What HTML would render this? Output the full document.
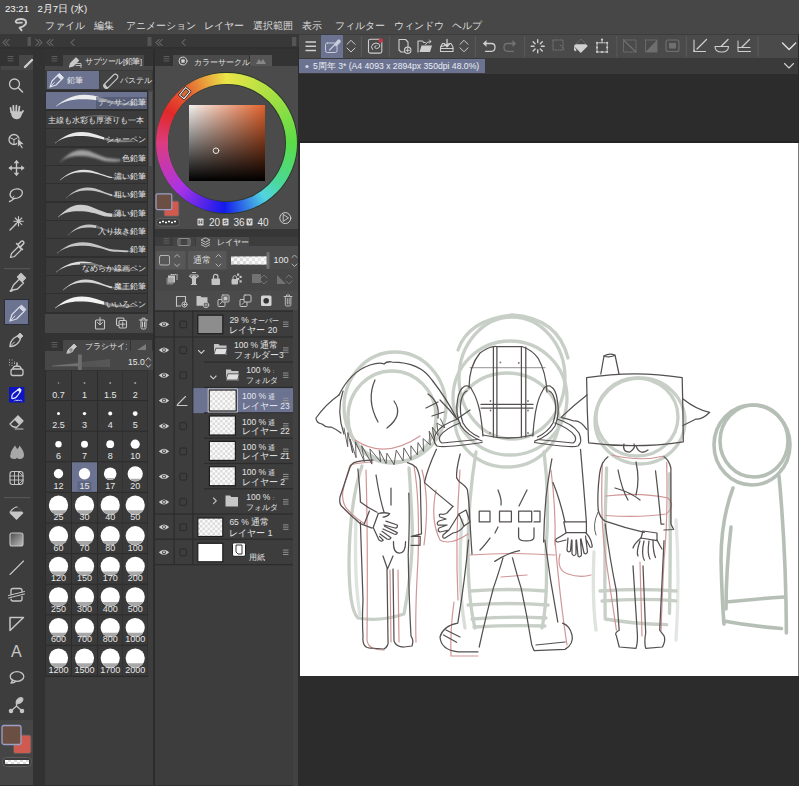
<!DOCTYPE html>
<html><head><meta charset="utf-8">
<style>
*{margin:0;padding:0;box-sizing:border-box}
html,body{width:799px;height:786px;overflow:hidden;background:#2c2c2c;font-family:"Liberation Sans",sans-serif;color:#d0d0d0}
.a{position:absolute}
.t{position:absolute;white-space:nowrap;line-height:1}
.m{font-size:10px;color:#dedede;top:20.5px}
.li{position:absolute;left:46px;width:101px;height:17px;background:#3b3b3b}
.lt{position:absolute;right:5px;bottom:3px;font-size:8.5px;color:#e4e4e4;white-space:nowrap;line-height:1}
.gc{position:absolute;width:25px;height:30px;background:#3b3b3b}
.gn{position:absolute;left:0;width:25px;text-align:center;font-size:9px;color:#e6e6e6;line-height:1}
.lr{position:absolute;left:155px;width:138px;height:24px}
.lp{position:absolute;font-size:8px;color:#e0e0e0;white-space:nowrap;line-height:1}
</style></head><body>
<!-- top bar -->
<div class="a" style="left:0;top:0;width:799px;height:34px;background:#474747"></div>
<div class="t" style="left:5px;top:3.5px;font-size:9.6px;font-weight:normal;color:#f4f4f4">23:21</div>
<div class="t" style="left:37.5px;top:3.5px;font-size:9.6px;font-weight:normal;color:#f4f4f4">2月7日 (水)</div>
<div class="t m" style="left:45px">ファイル</div>
<div class="t m" style="left:94px">編集</div>
<div class="t m" style="left:126px">アニメーション</div>
<div class="t m" style="left:204px">レイヤー</div>
<div class="t m" style="left:253px">選択範囲</div>
<div class="t m" style="left:302px">表示</div>
<div class="t m" style="left:335px">フィルター</div>
<div class="t m" style="left:394px">ウィンドウ</div>
<div class="t m" style="left:452px">ヘルプ</div>

<!-- header row -->
<div class="a" style="left:0;top:34px;width:299px;height:15px;background:#383838"></div>
<div class="a" style="left:0;top:47px;width:299px;height:2px;background:#303030"></div>

<!-- left toolbar -->
<div class="a" style="left:0;top:49px;width:33px;height:737px;background:#3d3d3d"></div>
<div class="a" style="left:0;top:49px;width:33px;height:17px;background:#333"></div>
<div class="a" style="left:19px;top:55px;width:14px;height:14px;background:#474747"></div>
<div class="a" style="left:1px;top:66px;width:32px;height:4px;background:#474747"></div>
<div class="a" style="left:4px;top:299px;width:25px;height:26px;background:#6b7391;border:1px solid #2a2d3a"></div>
<div class="a" style="left:0;top:720px;width:33px;height:66px;background:#454545"></div>
<div class="a" style="left:33px;top:49px;width:12px;height:737px;background:#323232"></div>

<!-- subtool panel -->
<div class="a" style="left:45px;top:49px;width:108px;height:737px;background:#3d3d3d"></div>
<div class="a" style="left:45px;top:49px;width:108px;height:17px;background:#333"></div>
<div class="a" style="left:63px;top:55px;width:81px;height:12px;background:#474747"></div>
<div class="a" style="left:45px;top:66px;width:108px;height:4px;background:#474747"></div>
<div class="t" style="left:85px;top:57.5px;font-size:7.6px;letter-spacing:-0.4px;color:#e0e0e0">サブツール[鉛筆]</div>
<div class="a" style="left:45px;top:70px;width:108px;height:20px;background:#3a3a3a"></div>
<div class="a" style="left:47px;top:71px;width:52px;height:18px;background:#6b7391"></div>
<div class="t" style="left:67px;top:75.5px;font-size:8.3px;color:#e8e8e8">鉛筆</div>
<div class="a" style="left:100px;top:71px;width:52px;height:18px;background:#424242"></div>
<div class="t" style="left:120px;top:75.5px;font-size:8.3px;color:#e0e0e0">パステル</div>
<div class="a" style="left:45px;top:90px;width:103px;height:224px;background:#2f2f2f"></div>
<div class="a" style="left:148px;top:90px;width:5px;height:224px;background:#454545"></div>
<div class="a" style="left:149px;top:92px;width:3px;height:74px;background:#555"></div>
<div class="li" style="top:92px;background:#6b7391"></div>
<div class="li" style="top:111px"></div>
<div class="li" style="top:129px"></div>
<div class="li" style="top:148px"></div>
<div class="li" style="top:166px"></div>
<div class="li" style="top:184px"></div>
<div class="li" style="top:203px"></div>
<div class="li" style="top:221px"></div>
<div class="li" style="top:239px"></div>
<div class="li" style="top:258px"></div>
<div class="li" style="top:276px"></div>
<div class="li" style="top:294px;height:18px"></div>
<!-- footer -->
<div class="a" style="left:45px;top:314px;width:108px;height:19px;background:#474747"></div>
<div class="a" style="left:45px;top:333px;width:108px;height:6px;background:#333"></div>
<!-- brush size -->
<div class="a" style="left:45px;top:339px;width:108px;height:12px;background:#333"></div>
<div class="a" style="left:63px;top:340px;width:67px;height:11px;background:#474747"></div>
<div class="a" style="left:131px;top:340px;width:21px;height:11px;background:#474747"></div>
<div class="t" style="left:85px;top:342.5px;font-size:7.5px;color:#e0e0e0;width:42px;overflow:hidden">ブラシサイズ</div>
<div class="a" style="left:45px;top:351px;width:108px;height:19px;background:#474747"></div>
<div class="t" style="left:128px;top:357.5px;font-size:8.6px;color:#e8e8e8">15.0</div>
<div class="a" style="left:45px;top:370px;width:103px;height:307px;background:#2c2c2c"></div>
<div class="a" style="left:148px;top:370px;width:5px;height:307px;background:#3d3d3d"></div>
<div id="grid"></div>

<!-- color/layer panel -->
<div class="a" style="left:155px;top:49px;width:143px;height:737px;background:#3d3d3d"></div>
<div class="a" style="left:155px;top:49px;width:143px;height:17px;background:#333"></div>
<div class="a" style="left:173px;top:55px;width:76px;height:11px;background:#4b4b4b"></div>
<div class="a" style="left:250px;top:55px;width:22px;height:11px;background:#555"></div>
<div class="t" style="left:194px;top:58.5px;font-size:7.5px;color:#e0e0e0">カラーサークル</div>
<div class="a" style="left:155px;top:66px;width:143px;height:163px;background:#4b4b4b"></div>
<div class="a" style="left:155px;top:229px;width:143px;height:8px;background:#363636"></div>
<div class="a" style="left:173px;top:237px;width:22px;height:9px;background:#444"></div>
<div class="a" style="left:196px;top:237px;width:53px;height:9px;background:#4b4b4b"></div>
<div class="t" style="left:216.5px;top:238.5px;font-size:7.5px;color:#e0e0e0">レイヤー</div>
<div class="a" style="left:155px;top:246px;width:143px;height:64px;background:#4b4b4b"></div>
<div class="a" style="left:155px;top:310px;width:143px;height:476px;background:#3d3d3d"></div>

<!-- canvas area -->
<div class="a" style="left:299px;top:34px;width:500px;height:24px;background:#4a4a4a"></div>
<div class="a" style="left:299px;top:33.5px;width:500px;height:1.2px;background:#3c3c3c"></div>
<div class="a" style="left:321px;top:35px;width:22px;height:23px;background:#6b7391"></div>
<div class="a" style="left:299px;top:58px;width:500px;height:16px;background:#3a3a3a"></div>
<div class="a" style="left:299px;top:59.3px;width:186px;height:13.4px;background:#6b7391"></div>
<div class="t" style="left:313px;top:61.5px;font-size:8.65px;color:#eceef4">5周年 3* (A4 4093 x 2894px 350dpi 48.0%)</div>
<div class="a" style="left:299px;top:74px;width:500px;height:712px;background:#2c2c2c"></div>
<div class="a" style="left:299px;top:141px;width:500px;height:1.5px;background:#242424"></div>
<div class="a" style="left:300px;top:142.5px;width:498px;height:533.5px;background:#fff"></div>
<div class="a" style="left:798px;top:142.5px;width:1px;height:533.5px;background:#7a7a7a"></div>
<div class="a" style="left:0;top:784.5px;width:299px;height:1.5px;background:#2e2e2e"></div>
<div class="a" style="left:155.5px;top:71.7px;width:142px;height:142px;border-radius:50%;background:#2a3a2a"></div>
<div class="a" style="left:156.3px;top:72.5px;width:140.4px;height:140.4px;border-radius:50%;background:conic-gradient(from 0deg,hsl(58,80%,60%),hsl(80,72%,57%) 40deg,hsl(112,68%,57%) 90deg,hsl(150,65%,57%) 125deg,hsl(185,70%,60%) 145deg,hsl(238,85%,50%) 182deg,hsl(280,78%,55%) 225deg,hsl(335,70%,55%) 270deg,hsl(0,75%,52%) 298deg,hsl(18,78%,55%) 325deg,hsl(58,80%,60%) 360deg)"></div>
<div class="a" style="left:167.5px;top:83.7px;width:118px;height:118px;border-radius:50%;background:#2f3a30"></div>
<div class="a" style="left:168.3px;top:84.5px;width:116.4px;height:116.4px;border-radius:50%;background:#4b4b4b"></div>
<div class="a" style="left:189px;top:105px;width:76.3px;height:76.2px;background:linear-gradient(to bottom,rgba(0,0,0,0),#000),linear-gradient(to right,#f4f2f0,#e2622c)"></div>
<svg class="a" style="left:0;top:0" width="799" height="786" viewBox="0 0 799 786"><g fill="none" stroke="#c6c6c6" stroke-width="1.3" stroke-linecap="round" stroke-linejoin="round">
<!-- header row chevrons -->
<path d="M6,39.5 l-3,3 3,3 M9,39.5 l-3,3 3,3" stroke="#8e8e8e" stroke-width="0.8"/>
<path d="M36,39.5 l3,3 -3,3 M39,39.5 l3,3 -3,3" stroke="#8e8e8e" stroke-width="0.8"/>
<path d="M50,39.5 l-3,3 3,3 M53,39.5 l-3,3 3,3" stroke="#8e8e8e" stroke-width="0.8"/>
<path d="M74,39.5 l-3,3 3,3" stroke="#8e8e8e" stroke-width="0.8"/>
<path d="M159,39.5 l-3,3 3,3 M162,39.5 l-3,3 3,3" stroke="#8e8e8e" stroke-width="0.8"/>
<path d="M185,39.5 l-3,3 3,3" stroke="#8e8e8e" stroke-width="0.8"/>
<!-- panel menus ≡ -->
<path d="M8,56.5h5M8,58.7h5M8,60.9h5 M52,56.5h5M52,58.7h5M52,60.9h5 M164,56.5h5M164,58.7h5M164,60.9h5 M52,342.5h5M52,344.7h5M52,346.9h5 M164,238.8h5M164,241h5M164,243.2h5" stroke="#7a7a7a" stroke-width="0.6"/>
<!-- tool tab pencil -->
<path d="M25,67 l7,-7" stroke="#cfcfcf" stroke-width="2.4"/>
<!-- magnifier -->
<circle cx="14.5" cy="84" r="5"/>
<path d="M18.3,87.8 l4.2,4.2" stroke-width="1.6"/>
<!-- hand -->
<path d="M11.2,112.5 l-0.6,-4.5 M13.6,111.5 l-0.3,-5.5 M16.2,111.5 l0.2,-5.8 M18.8,111.5 l0.6,-4.8 M21,114 l2,-3" stroke-width="1.8"/>
<path d="M10.8,111 L11.5,115.5 Q13,119.3 16.8,119.3 Q20.3,119.3 21.5,115.5 L21.8,111.5 L10.8,111 Z" fill="#c6c6c6" stroke="none"/>
<!-- 3D -->
<circle cx="14" cy="139.5" r="5"/>
<path d="M9.5,137.5 l4.5,2 4.5,-2 M14,139.5 l0,5" stroke-width="1"/>
<path d="M17.5,138.5 l0,9 2,-2.2 2.2,3.5 1.6,-1 -2.2,-3.3 3,-0.3 Z" fill="#c6c6c6" stroke="#3d3d3d" stroke-width="0.8"/>
<!-- move -->
<path d="M16.5,161 v14 M9.5,168 h14" stroke-width="1.4"/>
<path d="M16.5,160 l-2.8,3.3 h5.6Z M16.5,176 l-2.8,-3.3 h5.6Z M8.5,168 l3.3,-2.8 v5.6Z M24.5,168 l-3.3,-2.8 v5.6Z" fill="#c6c6c6" stroke="none"/>
<!-- lasso -->
<path d="M13,198.5 Q8.5,196 11,191.5 Q14,188 19,189 Q23.5,190.5 22,194.5 Q20,198.5 14,198.5 Q11.5,201 9.5,201.5"/>
<path d="M14,196 q-2,1 -1,3" stroke-width="1"/>
<!-- wand -->
<path d="M10,230 L16,224" stroke-width="1.4"/>
<path d="M18.5,216.5 v9.5 M13.8,221.3 h9.5 M15.2,218 l6.6,6.6 M21.8,218 l-6.6,6.6" stroke-width="1.1"/>
<circle cx="18.5" cy="221.3" r="1.8" fill="#c6c6c6" stroke="none"/>
<!-- eyedropper -->
<path d="M10.5,257.5 l1,-4 7,-7 3,3 -7,7 z" stroke-width="1.2"/>
<path d="M18,244.5 l3,-3 a1.6,1.6 0 0 1 2.4,2.4 l-3,3 M16.5,243.5 l6,6" stroke-width="1.5"/>
</g>
<!-- separators -->
<rect x="4" y="268" width="26" height="1.2" fill="#555"/>
<rect x="4" y="497" width="26" height="1.2" fill="#555"/>
<g fill="none" stroke="#c6c6c6" stroke-width="1.3" stroke-linecap="round" stroke-linejoin="round">
<!-- marker pen -->
<path d="M11,290.5 l2.5,-5.5 6,-6 4,4 -6,6 z" />
<path d="M17.5,277 l3.5,-3.5 4.5,4.5 -3.5,3.5 z" fill="#c6c6c6"/>
<path d="M10.5,291 l1.5,-0.5" stroke-width="2"/>
<!-- pencil active -->
<path d="M10,321 l2,-6.5 7.5,-7.5 4.5,4.5 -7.5,7.5 z" stroke="#d4d8e4"/>
<path d="M19.5,307 l2,-2 4.5,4.5 -2,2 z" fill="#d4d8e4" stroke="#d4d8e4" stroke-width="0.8"/>
<path d="M10,321 l5,-5" stroke="#d4d8e4" stroke-width="1"/>
<!-- ink pen -->
<path d="M10,346.5 q0,-5 4,-8.5 l3.5,-2 3,3 -2,3.5 q-3.5,4 -8.5,4 z" />
<path d="M17.5,335.5 l2.5,-2.5 3,3 -2.5,2.5 z" fill="#c6c6c6" stroke-width="0.8"/>
<path d="M10,346.5 l4.5,-4.5" stroke-width="1"/>
<!-- airbrush -->
<rect x="11" y="369" width="12" height="6.5" rx="2"/>
<path d="M13,369 q0,-3 4,-3 q4,0 4,3" />
<path d="M17,366 v-3" stroke-width="1.5"/>
<path d="M9.5,360 h0.1 M12,360 h0.1 M14.5,362 h0.1 M9.5,362.5 h0.1 M12,363 h0.1 M9.5,365 h0.1 M12,365.5 h0.1 M14.5,363.5 h0.1" stroke-width="1"/>
<!-- eraser -->
<path d="M12.5,426.5 l-2.5,-2.5 8,-8 5,5 -6.5,6.5 z" />
<path d="M14,419.5 l4,-4 5,5 -4,4 z" fill="#c6c6c6" stroke="none"/>
<path d="M15,429 h8" stroke-width="1"/>
<!-- blend drops -->
<path d="M10.5,455 q0,-4 4.5,-9.5 q2,3 2,3.5 q2,-1 2.5,-3.5 q4.5,5.5 4.5,9.5 q0,4 -4.5,4 q-2,0 -2.5,-1.5 q-0.5,1.5 -2.5,1.5 q-4.5,0 -4.5,-3.5 z" fill="#a8a8a8" stroke="none"/>
<!-- grid -->
<rect x="10" y="471.5" width="13" height="13" rx="2.5" stroke-width="1.1"/>
<path d="M14.5,471.5 v13 M18.5,471.5 v13 M10,476 h13 M10,480 h13 M18.5,471.5 l4.5,4.5 M18.5,484.5 l4.5,-4.5" stroke-width="0.9"/>
<!-- fill -->
<path d="M9.5,513 l7,-7 7,7 -7,7 z" fill="#c6c6c6" stroke="none"/>
<path d="M11,511.5 l5.5,-5.5 5.5,5.5 z" fill="#3d3d3d" stroke="none"/>
<path d="M10,512 q4,-5 7,-5" stroke-width="1.1"/>
<!-- gradient -->
<defs><linearGradient id="gg" x1="0" y1="0" x2="1" y2="1"><stop offset="0" stop-color="#4a4a4a"/><stop offset="1" stop-color="#bdbdbd"/></linearGradient></defs>
<rect x="10" y="533" width="13" height="13" rx="2" fill="url(#gg)" stroke="#c6c6c6" stroke-width="1.1"/>
<!-- line -->
<path d="M10,574.5 l13.5,-13.5" stroke-width="1.1"/>
<!-- frame -->
<rect x="11" y="588.5" width="11" height="12.5" rx="2"/>
<path d="M8.5,596.5 l16,-4 M8.5,598.5 l16,-4" stroke="#3d3d3d" stroke-width="1.8"/>
<path d="M8.5,595.5 l16,-4 M8.5,598 l16,-4" stroke-width="1"/>
<!-- ruler triangle -->
<path d="M10,630.5 v-13 h13.5 z" stroke-width="1.5"/>
<!-- balloon -->
<ellipse cx="17" cy="676.5" rx="6.8" ry="4.8"/>
<path d="M12.5,680 q-0.5,2 -1.5,3 q3,0 5,-1.8" />
<!-- correction -->
<path d="M11,711 l5.5,-5 5.5,5 M16.5,706 v-3" stroke-width="1.2"/>
<path d="M16,703 q0,-5 5,-5.5 q2,0 2,1.5 q0,4 -5.5,5 z" fill="#c6c6c6" stroke-width="0.9"/>
<circle cx="11" cy="711" r="1.6" fill="#c6c6c6"/><circle cx="22" cy="711" r="1.6" fill="#c6c6c6"/>
</g>
<!-- text A -->
<text x="16.3" y="657" font-family="Liberation Sans" font-size="16" fill="#c6c6c6" text-anchor="middle">A</text>
<!-- deco blue -->
<rect x="9" y="387" width="15.5" height="15.5" fill="#0d14c4"/>
<g fill="none" stroke="#e8ecff" stroke-width="1.2" stroke-linecap="round">
<path d="M12,398.5 q-1,-4 3,-6.5 l3.5,-2.5 2,2 -2.5,3.5 q-2.5,4 -6,3.5z"/>
<path d="M17.5,390 l2,-1.5 1.5,1.5 -1.5,2" fill="#e8ecff"/>
<path d="M14.5,401 l1.2,-1.2 1.2,1.2 1.2,-1.2 1.2,1.2 1.2,-1.2 1.2,1.2" stroke-width="0.8"/>
</g>
<!-- colors -->
<rect x="13.5" y="735" width="17.5" height="18.5" rx="2" fill="#cf5a50" stroke="#5a5a5a" stroke-width="1"/>
<rect x="2" y="725.5" width="19" height="19" rx="2" fill="#6b4f43" stroke="#9aa0c8" stroke-width="1.3"/>
<rect x="2.5" y="757.5" width="29" height="9" rx="4" fill="#3d3d3d" stroke="#5e5e5e" stroke-width="1"/>
<g fill="#fff">
<rect x="5" y="760" width="3" height="2"/><rect x="11" y="760" width="3" height="2"/><rect x="17" y="760" width="3" height="2"/><rect x="23" y="760" width="3" height="2"/>
<rect x="8" y="762" width="3" height="2"/><rect x="14" y="762" width="3" height="2"/><rect x="20" y="762" width="3" height="2"/><rect x="26" y="762" width="3" height="2"/>
<rect x="5" y="762" width="3" height="2" fill="#ddd"/><rect x="11" y="762" width="3" height="2" fill="#ddd"/><rect x="17" y="762" width="3" height="2" fill="#ddd"/><rect x="23" y="762" width="3" height="2" fill="#ddd"/>
<rect x="8" y="760" width="3" height="2" fill="#ddd"/><rect x="14" y="760" width="3" height="2" fill="#ddd"/><rect x="20" y="760" width="3" height="2" fill="#ddd"/><rect x="26" y="760" width="3" height="2" fill="#ddd"/>
</g>
<!-- grips -->
<rect x="27.5" y="37" width="3.5" height="9" fill="#555"/>
<rect x="147.5" y="37" width="4" height="9" fill="#555"/>
<rect x="292" y="37" width="4.3" height="9" fill="#555"/>
<path d="M21.9,22.6 Q18.5,22.6 16.8,22.9 Q14.6,21.8 16.8,19.9 Q21,18.2 24.8,19.8 Q27,21.8 25.5,24.3 Q23.2,27 19.6,27.7 L21.6,30.3" fill="none" stroke="#cacaca" stroke-width="1.9" stroke-linecap="round" stroke-linejoin="round"/>
<!-- layer tab icons -->
<rect x="178" y="238.5" width="12" height="7" rx="0.8" fill="none" stroke="#8a8a8a" stroke-width="1"/>
<path d="M180,238.5 v7 M188,238.5 v7" stroke="#8a8a8a" stroke-width="0.8"/>
<g fill="none" stroke="#c8c8c8" stroke-width="0.9" stroke-linejoin="round"><path d="M201,240 l4.5,-2.2 4.5,2.2 -4.5,2.2 z"/><path d="M201,242.3 l4.5,2.2 4.5,-2.2 M201,244.6 l4.5,2.2 4.5,-2.2"/></g>
<defs><filter id="b1" x="-20%" y="-50%" width="140%" height="200%"><feGaussianBlur stdDeviation="1.1"/></filter><filter id="b2" x="-20%" y="-50%" width="140%" height="200%"><feGaussianBlur stdDeviation="0.4"/></filter></defs>
<path d="M56.0,106.0 C62.9,101.0 71.5,94.8 84.4,94.8 C97.3,94.8 104.2,99.8 117.9,102.4 L142.0,104.0 L142.0,104.6 C133.4,105.7 124.8,105.5 114.5,104.5 C103.3,101.2 94.7,99.2 81.8,99.2 C71.5,99.2 62.9,101.5 56.0,106.4 Z" fill="#f2f2f2" opacity="0.95"/>
<path d="M55.0,143.0 C61.4,138.0 69.4,131.9 81.4,131.9 C93.4,131.9 99.8,136.9 112.6,139.4 L135.0,141.0 L135.0,141.6 C127.0,142.7 119.0,142.4 109.4,141.4 C99.0,138.1 91.0,136.1 79.0,136.1 C69.4,136.1 61.4,138.5 55.0,143.4 Z" fill="#f2f2f2" opacity="0.95"/>
<path d="M60.0,162.0 C65.2,157.0 71.7,150.0 81.5,150.0 C91.2,150.0 96.4,155.0 106.8,158.0 L125.0,160.0 L125.0,160.6 C118.5,162.1 112.0,162.0 104.2,161.0 C95.8,158.0 89.2,156.0 79.5,156.0 C71.7,156.0 65.2,157.5 60.0,162.4 Z" fill="#f2f2f2" opacity="0.55" filter="url(#b1)"/>
<path d="M60.0,180.0 C65.8,175.0 73.0,169.8 83.8,169.8 C94.6,169.8 100.3,174.8 111.8,176.9 L132.0,178.0 L132.0,178.6 C124.8,179.2 117.6,178.8 109.0,177.8 C99.6,174.2 92.4,172.2 81.6,172.2 C73.0,172.2 65.8,175.5 60.0,180.4 Z" fill="#f2f2f2" opacity="0.9"/>
<path d="M66.0,198.0 C71.3,193.0 77.9,187.4 87.8,187.4 C97.7,187.4 103.0,192.4 113.5,194.7 L132.0,196.0 L132.0,196.6 C125.4,197.4 118.8,197.1 110.9,196.1 C102.3,192.6 95.7,190.6 85.8,190.6 C77.9,190.6 71.3,193.5 66.0,198.4 Z" fill="#f2f2f2" opacity="0.75" filter="url(#b2)"/>
<path d="M58.0,217.0 C63.4,212.0 70.2,204.8 80.4,204.8 C90.6,204.8 96.1,209.8 107.0,212.9 L126.0,215.0 L126.0,215.6 C119.2,217.2 112.4,217.2 104.2,216.2 C95.4,213.2 88.6,211.2 78.4,211.2 C70.2,211.2 63.4,212.5 58.0,217.4 Z" fill="#f2f2f2" opacity="0.8" filter="url(#b2)"/>
<path d="M68.0,235.0 C73.1,230.0 79.5,224.4 89.1,224.4 C98.7,224.4 103.8,229.4 114.1,231.7 L132.0,233.0 L132.0,233.6 C125.6,234.4 119.2,234.1 111.5,233.1 C103.2,229.6 96.8,227.6 87.2,227.6 C79.5,227.6 73.1,230.5 68.0,235.4 Z" fill="#f2f2f2" opacity="0.75" filter="url(#b2)"/>
<path d="M57.0,253.0 C63.2,248.0 71.0,242.2 82.7,242.2 C94.4,242.2 100.7,247.2 113.2,249.6 L135.0,251.0 L135.0,251.6 C127.2,252.5 119.4,252.2 110.0,251.2 C99.9,247.8 92.1,245.8 80.4,245.8 C71.0,245.8 63.2,248.5 57.0,253.4 Z" fill="#f2f2f2" opacity="0.75" filter="url(#b2)"/>
<path d="M56.0,272.0 C62.4,267.0 70.4,261.4 82.4,261.4 C94.4,261.4 100.8,266.4 113.6,268.7 L136.0,270.0 L136.0,270.6 C128.0,271.4 120.0,271.1 110.4,270.1 C100.0,266.6 92.0,264.6 80.0,264.6 C70.4,264.6 62.4,267.5 56.0,272.4 Z" fill="#f2f2f2" opacity="0.9"/>
<path d="M63.0,290.0 C68.5,285.0 75.4,279.5 85.8,279.5 C96.1,279.5 101.6,284.5 112.7,286.8 L132.0,288.0 L132.0,288.6 C125.1,289.4 118.2,289.0 109.9,288.0 C101.0,284.5 94.0,282.5 83.7,282.5 C75.4,282.5 68.5,285.5 63.0,290.4 Z" fill="#f2f2f2" opacity="0.85"/>
<path d="M55.0,308.0 C61.5,303.0 69.6,296.6 81.7,296.6 C93.9,296.6 100.4,301.6 113.3,304.3 L136.0,306.0 L136.0,306.6 C127.9,307.8 119.8,307.6 110.1,306.6 C99.6,303.4 91.5,301.4 79.3,301.4 C69.6,301.4 61.5,303.5 55.0,308.4 Z" fill="#f2f2f2" opacity="1.0"/>
<path d="M80,118 q20,-5 40,0" stroke="#888" stroke-width="0.7" fill="none"/>
<g fill="none" stroke="#c8c8c8" stroke-width="1.1" stroke-linecap="round" stroke-linejoin="round">
<path d="M69.5,67 l1,-3.5 5.5,-5.5 2.5,2.5 -5.5,5.5 z" fill="#c8c8c8"/>
<path d="M76,63.5 h5 v4 M76,65.5 h5" stroke-width="0.9"/>
<path d="M50,87 l2,-6 7,-7 4,4 -7,7 z" stroke="#dfe2ea"/><path d="M57,76 l2.5,-2.5 4,4 -2.5,2.5" fill="#dfe2ea" stroke="#dfe2ea" stroke-width="0.8"/><path d="M50,87 l4.5,-4.5" stroke="#dfe2ea" stroke-width="0.8"/>
<path d="M104.5,84 l9,-9 a2.5,2.5 0 0 1 3.6,3.6 l-9,9 a2.5,2.5 0 0 1 -3.6,-3.6 z"/><path d="M105,84.5 a2,2 0 0 0 3,3" fill="#c8c8c8"/>
<rect x="95.5" y="320" width="9" height="9" rx="1"/><path d="M100,317.5 v7 M97.5,322.5 l2.5,2.5 2.5,-2.5" stroke-width="1"/>
<rect x="116.5" y="318" width="7.5" height="7.5" rx="1.2"/><rect x="119" y="320.5" width="7.5" height="7.5" rx="1.2" fill="#474747"/><path d="M122.7,322 v4.5 M120.5,324.2 h4.5" stroke-width="1"/>
<path d="M139.5,320 h8 M141,320 v7.5 q0,1.5 1.5,1.5 h2 q1.5,0 1.5,-1.5 v-7.5 M142,319.5 v-1.3 h3 v1.3 M142.5,322 v5 M144.5,322 v5" stroke-width="1"/>
<path d="M67,353 l1,-3 6,-6 2.5,2.5 -6,6 z" fill="#c8c8c8" stroke-width="0.9"/><circle cx="71" cy="350" r="2.2" fill="#8a8a8a" stroke="#c8c8c8" stroke-width="0.7"/>
<path d="M137,350 l9,-6 v6 z" fill="#7a7a7a" stroke="none"/>
</g>
<defs><linearGradient id="ramp" x1="0" x2="1"><stop offset="0" stop-color="#505050"/><stop offset="1" stop-color="#575757"/></linearGradient></defs>
<path d="M52,365.5 L110,359 L110,367 L52,366.5 Z" fill="url(#ramp)"/>
<path d="M52,365.8 L79,363.2 L79,366 L52,366.3 Z" fill="#7a7a7a" opacity="0.8"/>
<rect x="78" y="354.5" width="3.8" height="15.5" fill="#6e6e6e"/>
<path d="M145.8,360.5 l2.5,-2.8 2.5,2.8 M145.8,364.5 l2.5,2.8 2.5,-2.8" stroke="#c8c8c8" stroke-width="0.9" fill="none"/>
<rect x="46" y="370.5" width="25" height="29.6" fill="#3a3a3a"/>
<circle cx="58.5" cy="383.0" r="0.80" fill="#9a9a9a"/>
<rect x="72" y="370.5" width="25" height="29.6" fill="#3a3a3a"/>
<circle cx="84.5" cy="383.0" r="0.90" fill="#9a9a9a"/>
<rect x="98" y="370.5" width="24.5" height="29.6" fill="#3a3a3a"/>
<circle cx="110.2" cy="383.0" r="1.00" fill="#9a9a9a"/>
<rect x="123" y="370.5" width="24.5" height="29.6" fill="#3a3a3a"/>
<circle cx="135.2" cy="383.0" r="1.10" fill="#9a9a9a"/>
<rect x="46" y="401.1" width="25" height="29.6" fill="#3a3a3a"/>
<circle cx="58.5" cy="413.6" r="1.50" fill="#ffffff"/>
<rect x="72" y="401.1" width="25" height="29.6" fill="#3a3a3a"/>
<circle cx="84.5" cy="413.6" r="1.70" fill="#ffffff"/>
<rect x="98" y="401.1" width="24.5" height="29.6" fill="#3a3a3a"/>
<circle cx="110.2" cy="413.6" r="2.00" fill="#ffffff"/>
<rect x="123" y="401.1" width="24.5" height="29.6" fill="#3a3a3a"/>
<circle cx="135.2" cy="413.6" r="2.40" fill="#ffffff"/>
<rect x="46" y="431.7" width="25" height="29.6" fill="#3a3a3a"/>
<circle cx="58.5" cy="444.2" r="3.20" fill="#ffffff"/>
<rect x="72" y="431.7" width="25" height="29.6" fill="#3a3a3a"/>
<circle cx="84.5" cy="444.2" r="3.50" fill="#ffffff"/>
<rect x="98" y="431.7" width="24.5" height="29.6" fill="#3a3a3a"/>
<circle cx="110.2" cy="444.2" r="3.90" fill="#ffffff"/>
<rect x="123" y="431.7" width="24.5" height="29.6" fill="#3a3a3a"/>
<circle cx="135.2" cy="444.2" r="4.60" fill="#ffffff"/>
<rect x="46" y="462.3" width="25" height="29.6" fill="#3a3a3a"/>
<circle cx="58.5" cy="473.8" r="4.70" fill="#ffffff"/>
<rect x="72" y="462.3" width="25" height="29.6" fill="#6b7391"/>
<circle cx="84.5" cy="473.8" r="5.70" fill="#ffffff"/>
<rect x="77.5" y="481.3" width="14" height="10" rx="1.5" fill="#5d6481"/>
<rect x="98" y="462.3" width="24.5" height="29.6" fill="#3a3a3a"/>
<circle cx="110.2" cy="473.8" r="6.30" fill="#ffffff"/>
<path d="M105.5,477.9 A6.30,6.30 0 0 0 115.0,477.9 Z" fill="#aaa"/>
<rect x="123" y="462.3" width="24.5" height="29.6" fill="#3a3a3a"/>
<circle cx="135.2" cy="473.8" r="7.60" fill="#ffffff"/>
<path d="M129.6,478.7 A7.60,7.60 0 0 0 140.9,478.7 Z" fill="#aaa"/>
<rect x="46" y="492.9" width="25" height="29.6" fill="#3a3a3a"/>
<circle cx="58.5" cy="505.1" r="9.6" fill="#ffffff"/>
<path d="M50.4,510.3 A9.6,9.6 0 0 0 66.6,510.3 Z" fill="#a8a8a8"/>
<rect x="72" y="492.9" width="25" height="29.6" fill="#3a3a3a"/>
<circle cx="84.5" cy="505.1" r="9.6" fill="#ffffff"/>
<path d="M76.4,510.3 A9.6,9.6 0 0 0 92.6,510.3 Z" fill="#a8a8a8"/>
<rect x="98" y="492.9" width="24.5" height="29.6" fill="#3a3a3a"/>
<circle cx="110.2" cy="505.1" r="9.6" fill="#ffffff"/>
<path d="M102.2,510.3 A9.6,9.6 0 0 0 118.3,510.3 Z" fill="#a8a8a8"/>
<rect x="123" y="492.9" width="24.5" height="29.6" fill="#3a3a3a"/>
<circle cx="135.2" cy="505.1" r="9.6" fill="#ffffff"/>
<path d="M127.2,510.3 A9.6,9.6 0 0 0 143.3,510.3 Z" fill="#a8a8a8"/>
<rect x="46" y="523.5" width="25" height="29.6" fill="#3a3a3a"/>
<circle cx="58.5" cy="535.7" r="9.6" fill="#ffffff"/>
<path d="M50.4,540.9 A9.6,9.6 0 0 0 66.6,540.9 Z" fill="#a8a8a8"/>
<rect x="72" y="523.5" width="25" height="29.6" fill="#3a3a3a"/>
<circle cx="84.5" cy="535.7" r="9.6" fill="#ffffff"/>
<path d="M76.4,540.9 A9.6,9.6 0 0 0 92.6,540.9 Z" fill="#a8a8a8"/>
<rect x="98" y="523.5" width="24.5" height="29.6" fill="#3a3a3a"/>
<circle cx="110.2" cy="535.7" r="9.6" fill="#ffffff"/>
<path d="M102.2,540.9 A9.6,9.6 0 0 0 118.3,540.9 Z" fill="#a8a8a8"/>
<rect x="123" y="523.5" width="24.5" height="29.6" fill="#3a3a3a"/>
<circle cx="135.2" cy="535.7" r="9.6" fill="#ffffff"/>
<path d="M127.2,540.9 A9.6,9.6 0 0 0 143.3,540.9 Z" fill="#a8a8a8"/>
<rect x="46" y="554.1" width="25" height="29.6" fill="#3a3a3a"/>
<circle cx="58.5" cy="566.3" r="9.6" fill="#ffffff"/>
<path d="M50.4,571.5 A9.6,9.6 0 0 0 66.6,571.5 Z" fill="#a8a8a8"/>
<rect x="72" y="554.1" width="25" height="29.6" fill="#3a3a3a"/>
<circle cx="84.5" cy="566.3" r="9.6" fill="#ffffff"/>
<path d="M76.4,571.5 A9.6,9.6 0 0 0 92.6,571.5 Z" fill="#a8a8a8"/>
<rect x="98" y="554.1" width="24.5" height="29.6" fill="#3a3a3a"/>
<circle cx="110.2" cy="566.3" r="9.6" fill="#ffffff"/>
<path d="M102.2,571.5 A9.6,9.6 0 0 0 118.3,571.5 Z" fill="#a8a8a8"/>
<rect x="123" y="554.1" width="24.5" height="29.6" fill="#3a3a3a"/>
<circle cx="135.2" cy="566.3" r="9.6" fill="#ffffff"/>
<path d="M127.2,571.5 A9.6,9.6 0 0 0 143.3,571.5 Z" fill="#a8a8a8"/>
<rect x="46" y="584.7" width="25" height="29.6" fill="#3a3a3a"/>
<circle cx="58.5" cy="596.9" r="9.6" fill="#ffffff"/>
<path d="M50.4,602.1 A9.6,9.6 0 0 0 66.6,602.1 Z" fill="#a8a8a8"/>
<rect x="72" y="584.7" width="25" height="29.6" fill="#3a3a3a"/>
<circle cx="84.5" cy="596.9" r="9.6" fill="#ffffff"/>
<path d="M76.4,602.1 A9.6,9.6 0 0 0 92.6,602.1 Z" fill="#a8a8a8"/>
<rect x="98" y="584.7" width="24.5" height="29.6" fill="#3a3a3a"/>
<circle cx="110.2" cy="596.9" r="9.6" fill="#ffffff"/>
<path d="M102.2,602.1 A9.6,9.6 0 0 0 118.3,602.1 Z" fill="#a8a8a8"/>
<rect x="123" y="584.7" width="24.5" height="29.6" fill="#3a3a3a"/>
<circle cx="135.2" cy="596.9" r="9.6" fill="#ffffff"/>
<path d="M127.2,602.1 A9.6,9.6 0 0 0 143.3,602.1 Z" fill="#a8a8a8"/>
<rect x="46" y="615.3" width="25" height="29.6" fill="#3a3a3a"/>
<circle cx="58.5" cy="627.5" r="9.6" fill="#ffffff"/>
<path d="M50.4,632.7 A9.6,9.6 0 0 0 66.6,632.7 Z" fill="#a8a8a8"/>
<rect x="72" y="615.3" width="25" height="29.6" fill="#3a3a3a"/>
<circle cx="84.5" cy="627.5" r="9.6" fill="#ffffff"/>
<path d="M76.4,632.7 A9.6,9.6 0 0 0 92.6,632.7 Z" fill="#a8a8a8"/>
<rect x="98" y="615.3" width="24.5" height="29.6" fill="#3a3a3a"/>
<circle cx="110.2" cy="627.5" r="9.6" fill="#ffffff"/>
<path d="M102.2,632.7 A9.6,9.6 0 0 0 118.3,632.7 Z" fill="#a8a8a8"/>
<rect x="123" y="615.3" width="24.5" height="29.6" fill="#3a3a3a"/>
<circle cx="135.2" cy="627.5" r="9.6" fill="#ffffff"/>
<path d="M127.2,632.7 A9.6,9.6 0 0 0 143.3,632.7 Z" fill="#a8a8a8"/>
<rect x="46" y="645.9" width="25" height="29.6" fill="#3a3a3a"/>
<circle cx="58.5" cy="658.1" r="9.6" fill="#ffffff"/>
<path d="M50.4,663.3 A9.6,9.6 0 0 0 66.6,663.3 Z" fill="#a8a8a8"/>
<rect x="72" y="645.9" width="25" height="29.6" fill="#3a3a3a"/>
<circle cx="84.5" cy="658.1" r="9.6" fill="#ffffff"/>
<path d="M76.4,663.3 A9.6,9.6 0 0 0 92.6,663.3 Z" fill="#a8a8a8"/>
<rect x="98" y="645.9" width="24.5" height="29.6" fill="#3a3a3a"/>
<circle cx="110.2" cy="658.1" r="9.6" fill="#ffffff"/>
<path d="M102.2,663.3 A9.6,9.6 0 0 0 118.3,663.3 Z" fill="#a8a8a8"/>
<rect x="123" y="645.9" width="24.5" height="29.6" fill="#3a3a3a"/>
<circle cx="135.2" cy="658.1" r="9.6" fill="#ffffff"/>
<path d="M127.2,663.3 A9.6,9.6 0 0 0 143.3,663.3 Z" fill="#a8a8a8"/>
<g fill="none" stroke="#d0d0d0" stroke-linecap="round" stroke-linejoin="round">
<circle cx="183" cy="61" r="4" stroke-width="1"/>
<rect x="181.3" y="59.3" width="3.4" height="3.4" fill="#d0d0d0" stroke="none"/>
<path d="M256,64 l3,-5 2,3 2,-3 3,5 z" fill="#888" stroke="none"/>
<!-- hue marker -->
<g transform="translate(184.8,93.2) rotate(-50)">
<rect x="-4.8" y="-3" width="9.6" height="6" fill="#d26a3a" stroke="#111" stroke-width="2.2"/>
<rect x="-4.8" y="-3" width="9.6" height="6" fill="none" stroke="#fff" stroke-width="1"/>
</g>
<circle cx="216" cy="150.7" r="2.8" stroke="#e8e8e8" stroke-width="1"/>
<!-- swatches -->
<rect x="164" y="201" width="15" height="15.3" rx="1.5" fill="#cf5a50" stroke="#5a5a5a" stroke-width="1"/>
<rect x="156" y="193.8" width="15.8" height="15.8" rx="1.5" fill="#6b4f43" stroke="#9aa0c8" stroke-width="1.2"/>
<rect x="156.5" y="218.5" width="23" height="7.5" rx="3.5" fill="#3d3d3d" stroke="#6a6a6a" stroke-width="0.8"/>
<path d="M159,222.5 h2 M162,221.5 h2 M165,222.5 h2 M168,221.5 h2 M171,222.5 h2 M174,221.5 h2" stroke="#fff" stroke-width="1.3" stroke-linecap="butt"/>
<circle cx="285.3" cy="218.1" r="5.5" stroke-width="1"/>
<path d="M283.2,214.8 v6.6 l5,-3.3 z" stroke-width="0.9"/>
</g>
<g fill="#d8d8d8">
<rect x="197.5" y="218.5" width="6" height="7" rx="0.8"/>
<rect x="222.5" y="218.5" width="6" height="7" rx="0.8"/>
<rect x="246.5" y="218.5" width="6" height="7" rx="0.8"/>
</g>
<g font-family="Liberation Sans" font-size="6" font-weight="bold" fill="#4b4b4b" text-anchor="middle">
<text x="200.5" y="224.3">H</text><text x="225.5" y="224.3">S</text><text x="249.5" y="224.3">V</text>
</g>
<g font-family="Liberation Sans" font-size="10" fill="#e4e4e4">
<text x="209" y="225.5">20</text><text x="233.5" y="225.5">36</text><text x="257.5" y="225.5">40</text>
</g>
<rect x="155.6" y="251" width="30" height="19" rx="1.5" fill="#575757"/>
<rect x="188" y="251" width="38.6" height="19" rx="1.5" fill="#575757"/>
<g fill="none" stroke="#bdbdbd" stroke-width="0.9" stroke-linecap="round" stroke-linejoin="round">
<rect x="159.5" y="255.5" width="10" height="9.5" rx="1.5"/>
<path d="M174.5,257 l2.5,-2.5 2.5,2.5 M174.5,264 l2.5,2.5 2.5,-2.5"/>
<path d="M216,257 l2.5,-2.5 2.5,2.5 M216,264 l2.5,2.5 2.5,-2.5"/>
<path d="M292,257.5 l2.5,-2.5 2.5,2.5 M292,264 l2.5,2.5 2.5,-2.5"/>
</g>
<defs><pattern id="chk" width="6" height="6" patternUnits="userSpaceOnUse"><rect width="6" height="6" fill="#f4f4f4"/><rect width="3" height="3" fill="#c8c8c8"/><rect x="3" y="3" width="3" height="3" fill="#c8c8c8"/></pattern>
<pattern id="chk2" width="5" height="5" patternUnits="userSpaceOnUse"><rect width="5" height="5" fill="#fafafa"/><rect width="2.5" height="2.5" fill="#dcdcdc"/><rect x="2.5" y="2.5" width="2.5" height="2.5" fill="#dcdcdc"/></pattern>
<linearGradient id="opg" x1="0" x2="1"><stop offset="0" stop-color="#fff" stop-opacity="0.2"/><stop offset="1" stop-color="#fff" stop-opacity="0.6"/></linearGradient></defs>
<rect x="231" y="256.5" width="36" height="8" fill="url(#chk)"/>
<rect x="231" y="256.5" width="36" height="8" fill="url(#opg)"/>
<rect x="266.5" y="252" width="3" height="17" rx="1" fill="#707070"/>
<rect x="155" y="269.5" width="143" height="21" fill="#474747"/>
<g fill="none" stroke="#c4c4c4" stroke-width="1" stroke-linecap="round" stroke-linejoin="round">
<rect x="168" y="275.5" width="7" height="7" fill="#c4c4c4" stroke="none"/><path d="M171,274.5 h6 v6" stroke-dasharray="1,1"/><rect x="166.5" y="277.5" width="7" height="7" rx="1" fill="#9a9a9a" stroke="none" opacity="0.7"/>
<path d="M194,275 v9 M190.5,275 h7 M191.5,284.5 h5 M192,278 l-2.5,-2 M196,278 l2.5,-2 M192.5,272.5 h3" stroke-width="1.2"/><rect x="192" y="276" width="4" height="8.5" fill="#c4c4c4" stroke="none"/>
<rect x="211.5" y="278.5" width="8.5" height="6.5" rx="1" fill="#c4c4c4" stroke="none"/><path d="M213.5,278.5 v-2 a2.2,2.2 0 0 1 4.4,0 v2" stroke-width="1.2"/>
<rect x="231.5" y="279" width="6.5" height="5.5" rx="1" fill="#c4c4c4" stroke="none"/><path d="M233,279 v-1.5 a1.8,1.8 0 0 1 3.6,0 v1.5"/><g fill="#c4c4c4" stroke="none"><rect x="237" y="273.5" width="2.2" height="2.2"/><rect x="239.5" y="275.8" width="2.2" height="2.2"/><rect x="237" y="278" width="2.2" height="2.2"/><rect x="239.5" y="280.3" width="2.2" height="2.2"/></g>
<g opacity="0.35"><rect x="252" y="274" width="9" height="9" rx="1" fill="#c4c4c4" stroke="none"/><path d="M261,278 l3,-3 3,3 M261,281 l3,3 3,-3"/></g>
<g opacity="0.35"><path d="M277,284 v-9 l9,9 z" fill="#c4c4c4" stroke="none"/><path d="M286,278 l3,-3 3,3 M286,281 l3,3 3,-3"/></g>
<path d="M176.5,306 v-9.5 h9 v7" stroke-width="1.1"/><path d="M176.5,306 h4" stroke-width="1.1"/><circle cx="184.5" cy="304.5" r="2.6" fill="#474747"/><path d="M184.5,303 v3 M183,304.5 h3" stroke-width="0.9"/>
<path d="M196.5,296 h4 l1,1.3 h6 v8.5 h-11 z" fill="#c4c4c4" stroke="none"/><circle cx="206" cy="305" r="2.8" fill="#474747" stroke="#c4c4c4" stroke-width="0.9"/><path d="M206,303.5 v3 M204.5,305 h3" stroke-width="0.8"/>
<rect x="218" y="299.5" width="7" height="7" rx="1" fill="#474747"/><rect x="222" y="295" width="7" height="7" rx="1" fill="#474747"/><rect x="223.5" y="296.5" width="4" height="4" fill="#c4c4c4" stroke="none"/><path d="M223,301 l-3,3" stroke-width="0.9"/>
<rect x="240" y="299.5" width="7" height="7" rx="1" fill="#474747"/><rect x="244" y="295" width="7" height="7" rx="1" fill="#474747"/><path d="M242,304.5 l3,-3" stroke-width="0.9"/>
<rect x="261" y="295.5" width="10.5" height="10.5" rx="1.5" fill="#d4d4d4" stroke="none"/><circle cx="266.2" cy="300.7" r="2.8" fill="#333" stroke="none"/>
<path d="M284,296.5 h8 M285.3,296.5 v8 q0,1.5 1.3,1.5 h3 q1.3,0 1.3,-1.5 v-8 M286.5,296 v-1 h3 v1 M287.3,298.5 v5.5 M289.2,298.5 v5.5" stroke-width="0.9"/>
</g>
<rect x="155" y="310" width="138" height="254.6" fill="#3d3d3d"/>
<rect x="293" y="310" width="5" height="476" fill="#424242"/>
<rect x="193" y="388.1" width="100" height="25" fill="#6b7391"/>
<rect x="155" y="310.6" width="138" height="1.2" fill="#2c2c2c"/>
<rect x="155" y="336.4" width="138" height="1.2" fill="#2c2c2c"/>
<rect x="204" y="361.5" width="89" height="1.2" fill="#2c2c2c"/>
<rect x="204" y="386.8" width="89" height="1.2" fill="#2c2c2c"/>
<rect x="204" y="412.2" width="89" height="1.2" fill="#2c2c2c"/>
<rect x="204" y="437.6" width="89" height="1.2" fill="#2c2c2c"/>
<rect x="204" y="462.9" width="89" height="1.2" fill="#2c2c2c"/>
<rect x="204" y="488.2" width="89" height="1.2" fill="#2c2c2c"/>
<rect x="155" y="513.4" width="138" height="1.2" fill="#2c2c2c"/>
<rect x="155" y="538.6" width="138" height="1.2" fill="#2c2c2c"/>
<rect x="155" y="564.0" width="138" height="1.2" fill="#2c2c2c"/>
<rect x="173.5" y="310" width="1.2" height="254.6" fill="#2c2c2c"/>
<rect x="192.2" y="310" width="1.2" height="254.6" fill="#2c2c2c"/>
<path d="M158.8,324.3 q5.2,-5 10.4,0 q-5.2,5 -10.4,0 z" fill="#d0d0d0"/><circle cx="164" cy="324.3" r="1.9" fill="#3d3d3d"/><circle cx="164" cy="324.3" r="1" fill="#d0d0d0"/>
<rect x="179.8" y="321.0" width="6.8" height="6.8" rx="1.3" fill="none" stroke="#2a2a2a" stroke-width="1"/>
<path d="M283,322.1 h5.5 M283,324.3 h5.5 M283,326.5 h5.5" stroke="#9a9a9a" stroke-width="0.9"/>
<path d="M158.8,350.1 q5.2,-5 10.4,0 q-5.2,5 -10.4,0 z" fill="#d0d0d0"/><circle cx="164" cy="350.1" r="1.9" fill="#3d3d3d"/><circle cx="164" cy="350.1" r="1" fill="#d0d0d0"/>
<rect x="179.8" y="346.8" width="6.8" height="6.8" rx="1.3" fill="none" stroke="#2a2a2a" stroke-width="1"/>
<path d="M283,347.9 h5.5 M283,350.1 h5.5 M283,352.3 h5.5" stroke="#9a9a9a" stroke-width="0.9"/>
<path d="M158.8,375.2 q5.2,-5 10.4,0 q-5.2,5 -10.4,0 z" fill="#d0d0d0"/><circle cx="164" cy="375.2" r="1.9" fill="#3d3d3d"/><circle cx="164" cy="375.2" r="1" fill="#d0d0d0"/>
<rect x="179.8" y="371.9" width="6.8" height="6.8" rx="1.3" fill="none" stroke="#2a2a2a" stroke-width="1"/>
<path d="M283,373.0 h5.5 M283,375.2 h5.5 M283,377.4 h5.5" stroke="#9a9a9a" stroke-width="0.9"/>
<path d="M158.8,400.5 q5.2,-5 10.4,0 q-5.2,5 -10.4,0 z" fill="#d0d0d0"/><circle cx="164" cy="400.5" r="1.9" fill="#3d3d3d"/><circle cx="164" cy="400.5" r="1" fill="#d0d0d0"/>
<path d="M177,405.5 h10 M177.5,404.5 l8,-8" stroke="#c8c8c8" stroke-width="1.1" fill="none" stroke-linecap="round"/>
<path d="M283,398.3 h5.5 M283,400.5 h5.5 M283,402.7 h5.5" stroke="#9a9a9a" stroke-width="0.9"/>
<path d="M158.8,425.9 q5.2,-5 10.4,0 q-5.2,5 -10.4,0 z" fill="#d0d0d0"/><circle cx="164" cy="425.9" r="1.9" fill="#3d3d3d"/><circle cx="164" cy="425.9" r="1" fill="#d0d0d0"/>
<rect x="179.8" y="422.6" width="6.8" height="6.8" rx="1.3" fill="none" stroke="#2a2a2a" stroke-width="1"/>
<path d="M283,423.7 h5.5 M283,425.9 h5.5 M283,428.1 h5.5" stroke="#9a9a9a" stroke-width="0.9"/>
<path d="M158.8,451.3 q5.2,-5 10.4,0 q-5.2,5 -10.4,0 z" fill="#d0d0d0"/><circle cx="164" cy="451.3" r="1.9" fill="#3d3d3d"/><circle cx="164" cy="451.3" r="1" fill="#d0d0d0"/>
<rect x="179.8" y="448.0" width="6.8" height="6.8" rx="1.3" fill="none" stroke="#2a2a2a" stroke-width="1"/>
<path d="M283,449.1 h5.5 M283,451.3 h5.5 M283,453.5 h5.5" stroke="#9a9a9a" stroke-width="0.9"/>
<path d="M158.8,476.6 q5.2,-5 10.4,0 q-5.2,5 -10.4,0 z" fill="#d0d0d0"/><circle cx="164" cy="476.6" r="1.9" fill="#3d3d3d"/><circle cx="164" cy="476.6" r="1" fill="#d0d0d0"/>
<rect x="179.8" y="473.3" width="6.8" height="6.8" rx="1.3" fill="none" stroke="#2a2a2a" stroke-width="1"/>
<path d="M283,474.4 h5.5 M283,476.6 h5.5 M283,478.8 h5.5" stroke="#9a9a9a" stroke-width="0.9"/>
<path d="M158.8,501.9 q5.2,-5 10.4,0 q-5.2,5 -10.4,0 z" fill="#d0d0d0"/><circle cx="164" cy="501.9" r="1.9" fill="#3d3d3d"/><circle cx="164" cy="501.9" r="1" fill="#d0d0d0"/>
<rect x="179.8" y="498.6" width="6.8" height="6.8" rx="1.3" fill="none" stroke="#2a2a2a" stroke-width="1"/>
<path d="M283,499.7 h5.5 M283,501.9 h5.5 M283,504.1 h5.5" stroke="#9a9a9a" stroke-width="0.9"/>
<path d="M158.8,527.1 q5.2,-5 10.4,0 q-5.2,5 -10.4,0 z" fill="#d0d0d0"/><circle cx="164" cy="527.1" r="1.9" fill="#3d3d3d"/><circle cx="164" cy="527.1" r="1" fill="#d0d0d0"/>
<rect x="179.8" y="523.8" width="6.8" height="6.8" rx="1.3" fill="none" stroke="#2a2a2a" stroke-width="1"/>
<path d="M283,524.9 h5.5 M283,527.1 h5.5 M283,529.3 h5.5" stroke="#9a9a9a" stroke-width="0.9"/>
<path d="M158.8,552.3 q5.2,-5 10.4,0 q-5.2,5 -10.4,0 z" fill="#d0d0d0"/><circle cx="164" cy="552.3" r="1.9" fill="#3d3d3d"/><circle cx="164" cy="552.3" r="1" fill="#d0d0d0"/>
<rect x="179.8" y="549.0" width="6.8" height="6.8" rx="1.3" fill="none" stroke="#2a2a2a" stroke-width="1"/>
<path d="M283,550.1 h5.5 M283,552.3 h5.5 M283,554.5 h5.5" stroke="#9a9a9a" stroke-width="0.9"/>
<rect x="197.8" y="315.2" width="25" height="18.5" fill="#8d8d8d" stroke="#1e1e1e" stroke-width="1.2"/>
<rect x="208.39999999999998" y="389.2" width="28.6" height="22.6" fill="none" stroke="#eef0f6" stroke-width="1.2"/><rect x="209.2" y="390" width="27" height="21" fill="url(#chk2)" stroke="#1e1e1e" stroke-width="1.2"/>
<rect x="209.4" y="416" width="26" height="19" fill="url(#chk2)" stroke="#1e1e1e" stroke-width="1.2"/>
<rect x="209.4" y="441.4" width="26" height="19" fill="url(#chk2)" stroke="#1e1e1e" stroke-width="1.2"/>
<rect x="209.4" y="466.7" width="26" height="19" fill="url(#chk2)" stroke="#1e1e1e" stroke-width="1.2"/>
<rect x="197.8" y="518" width="25" height="18.5" fill="url(#chk2)" stroke="#1e1e1e" stroke-width="1.2"/>
<rect x="197.8" y="543.3" width="25" height="18.5" fill="#ffffff" stroke="#1e1e1e" stroke-width="1.2"/>
<rect x="232.5" y="542.8" width="13" height="13.5" rx="1.5" fill="#fff" stroke="#1e1e1e" stroke-width="1"/><path d="M236,545 h6 v9 h-4 l-2,-2 z" fill="none" stroke="#222" stroke-width="0.9"/>
<g fill="none" stroke="#c8c8c8" stroke-width="1.1" stroke-linecap="round" stroke-linejoin="round"><path d="M198.5,350.5 l2.8,2.8 2.8,-2.8"/><path d="M210.5,376 l2.8,2.8 2.8,-2.8"/><path d="M213.5,498 l2.8,2.8 -2.8,2.8"/></g>
<path d="M214,344 h4.5 l1.3,1.5 h6.7 v9.5 h-12.5 z" fill="#c6c6c6"/><path d="M215.8,348.3 h11.5 l-1.6,6.2 h-11.7 z" fill="#e0e0e0" stroke="#3d3d3d" stroke-width="0.8"/>
<path d="M226,369.5 h4.5 l1.3,1.5 h6.7 v9.5 h-12.5 z" fill="#c6c6c6"/><path d="M227.8,373.8 h11.5 l-1.6,6.2 h-11.7 z" fill="#e0e0e0" stroke="#3d3d3d" stroke-width="0.8"/>
<path d="M225.5,495.5 h4.5 l1.3,1.5 h6.7 v9.5 h-12.5 z" fill="#c6c6c6"/>
<g fill="none" stroke="#cfcfcf" stroke-width="1.2" stroke-linecap="round" stroke-linejoin="round">
<path d="M305.5,42 h10.5 M305.5,46.3 h10.5 M305.5,50.5 h10.5" stroke-width="1.5" stroke-linecap="butt"/>
<rect x="325.5" y="43" width="11.5" height="9.5" rx="1.8" stroke="#c9cddb" stroke-width="1"/>
<path d="M329.5,50 l5.5,-5.5" stroke="#c9cddb" stroke-width="1.1"/>
<path d="M334.5,44.5 l2.5,-3.5 q1.5,-2 3,-0.8 q1.2,1.4 -0.6,3 l-3.4,2.8 z" fill="#c9cddb" stroke="#c9cddb" stroke-width="0.8"/>
<path d="M347,44.3 l4,-4 4,4 M347,48 l4,4 4,-4" stroke-width="1"/>
<rect x="368.5" y="39.3" width="13.3" height="13.8" rx="1.8" stroke-width="1.1"/>
<path d="M372.5,49.5 q-2.5,-3 0.5,-5.5 q3,-2 6,0 q2,2 -0.5,4 q-2.5,1.5 -3.8,-0.5 q-0.5,-1.5 1.5,-1.8" stroke-width="1"/>
<path d="M399,39.5 h6.5 l2.5,2.5 v5.5 M399,39.5 v10.5 l2,2 h3.5" stroke-width="1.1"/>
<circle cx="407.7" cy="50.3" r="3.2" fill="#4a4a4a" stroke-width="1.1"/>
<path d="M407.7,48.6 v3.4 M406,50.3 h3.4" stroke-width="1"/>
<path d="M418,52 v-11 h4.5 l1.2,1.5 h1.5" stroke-width="1.1"/>
<path d="M419.5,52 l2,-6.5 h10.5 l-2,6.5 z" fill="#cfcfcf" stroke="none"/>
<path d="M425.5,44.5 q1,-3 5,-3 M429.5,40 l1.5,1.5 -1.5,1.5" stroke-width="1"/>
<path d="M440.5,47 l2,-3.5 h2 M449.5,43.5 h1.5 l2,3.5 v4.5 h-12.5 v-4.5 z" stroke-width="1.1"/>
<path d="M440.5,48.5 h12.5" stroke-width="1.1"/>
<path d="M447,39.5 v7 M444.5,44 l2.5,2.7 2.5,-2.7" stroke-width="1.3"/>
<path d="M460,44.3 l4,-4 4,4 M460,47.8 l4,4 4,-4" stroke-width="1"/>
<path d="M484,43.5 h7.5 q3.5,0 3.5,3.8 q0,4 -3.5,4 h-6" stroke-width="1.3"/>
<path d="M483,43.5 l3.5,-3.5 v7 z" fill="#cfcfcf" stroke="none"/>
<g opacity="0.3"><path d="M515,43.5 h-7.5 q-3.5,0 -3.5,3.8 q0,4 3.5,4 h6" stroke-width="1.3"/><path d="M516,43.5 l-3.5,-3.5 v7 z" fill="#cfcfcf" stroke="none"/></g>
<g stroke-width="1.4"><path d="M537.7,39.8 v2.8 M537.7,50 v2.8 M531.2,46.3 h2.8 M541.4,46.3 h2.8 M533.1,41.7 l2,2 M540.3,48.9 l2,2 M533.1,50.9 l2,-2 M540.3,43.7 l2,-2"/></g>
<g opacity="0.3" stroke-width="1" stroke-dasharray="1.2,1.2"><rect x="553" y="40" width="10" height="10"/><path d="M560,45 l5,5"/></g>
<path d="M573.8,46 l7,-7 7,7 -7,7 z" fill="#d0d0d0" stroke="none"/>
<path d="M575.5,44.2 l5.3,-5.3 5.3,5.3 z" fill="#4a4a4a" stroke="none"/>
<path d="M574.5,46.5 q-1.5,3.5 0.5,4.5 q1,0.5 1.5,-0.5" fill="#d0d0d0" stroke="none"/>
<rect x="597" y="42.8" width="10.2" height="9.2" stroke-width="1" stroke-dasharray="1.3,1"/>
<path d="M602,42.8 v-3" stroke-width="1"/>
<g fill="#cfcfcf" stroke="none"><circle cx="597" cy="42.8" r="1"/><circle cx="607.2" cy="42.8" r="1"/><circle cx="597" cy="52" r="1"/><circle cx="607.2" cy="52" r="1"/><circle cx="602" cy="39.5" r="1.1"/><circle cx="602" cy="52" r="1"/><circle cx="597" cy="47.4" r="1"/><circle cx="607.2" cy="47.4" r="1"/></g>
<g opacity="0.28"><rect x="623.5" y="40" width="12.5" height="12" stroke-width="1" stroke-dasharray="1.2,1.2"/><path d="M623.5,40 l12.5,12" stroke-width="1.2"/>
<rect x="645.5" y="40" width="11.5" height="12" stroke-width="1" stroke-dasharray="1.2,1.2"/><path d="M657,40 v12 h-11.5 z" fill="#cfcfcf" stroke="none"/>
<rect x="666" y="40" width="13" height="11.5" rx="2" stroke-width="1.1"/><rect x="669" y="43" width="7" height="5.5" fill="#cfcfcf" stroke="none" stroke-dasharray="1,1"/></g>
<path d="M694,40 v11.5 h11.5" stroke-width="1.1"/><path d="M694.5,51 l-0.5,-0.5" /><path d="M697,49 l9.5,-9.5" stroke-width="1.3"/><path d="M694,51.5 l10,0" stroke-width="1.1"/>
<path d="M715,46.5 h13.5 q0,5.5 -6.8,5.5 q-6.7,0 -6.7,-5.5 z" stroke-width="1.1"/><path d="M721.5,46 l6.5,-6.5" stroke-width="1.3"/>
<path d="M738,41 v10.5 h12.5 M738,47.5 h12" stroke-width="1"/><path d="M742,47 l7.5,-7.5" stroke-width="1.3"/>
<path d="M782.5,43 l6.6,6.6 6.6,-6.6" stroke="#e0e0e0" stroke-width="1.4"/>
<path d="M784.5,63.5 l4.5,4.5 4.5,-4.5" stroke="#d0d0d0" stroke-width="1.1"/>
</g>
<circle cx="380.8" cy="40.5" r="2.3" fill="#c0384a"/>
<g fill="#585858">
<rect x="360.8" y="36" width="1.2" height="21"/><rect x="388.8" y="36" width="1.2" height="21"/><rect x="474.8" y="36" width="1.2" height="21"/><rect x="524" y="36" width="1.2" height="21"/><rect x="616.2" y="36" width="1.2" height="21"/><rect x="685.8" y="36" width="1.2" height="21"/><rect x="757.3" y="36" width="1.2" height="21"/>
</g>
<circle cx="307" cy="66.5" r="1.6" fill="#d4d7e2"/>
<rect x="798" y="34" width="1" height="107" fill="#2a2a2a"/>
</svg><div class="t" style="right:652px;top:97px;font-size:7.8px;color:#e4e4e4;background:rgba(75,80,100,0.6);padding:2px 1px 2px 2px">デッサン鉛筆</div>
<div class="t" style="left:48px;top:117px;font-size:7.8px;color:#e2e2e2">主線も水彩も厚塗りも一本</div>
<div class="t" style="right:652px;top:134px;font-size:7.8px;color:#e4e4e4;background:rgba(58,58,58,0.6);padding:2px 1px 2px 2px">シャーペン</div>
<div class="t" style="right:652px;top:153px;font-size:7.8px;color:#e4e4e4;background:rgba(58,58,58,0.6);padding:2px 1px 2px 2px">色鉛筆</div>
<div class="t" style="right:652px;top:171px;font-size:7.8px;color:#e4e4e4;background:rgba(58,58,58,0.6);padding:2px 1px 2px 2px">濃い鉛筆</div>
<div class="t" style="right:652px;top:189px;font-size:7.8px;color:#e4e4e4;background:rgba(58,58,58,0.6);padding:2px 1px 2px 2px">粗い鉛筆</div>
<div class="t" style="right:652px;top:208px;font-size:7.8px;color:#e4e4e4;background:rgba(58,58,58,0.6);padding:2px 1px 2px 2px">薄い鉛筆</div>
<div class="t" style="right:652px;top:226px;font-size:7.8px;color:#e4e4e4;background:rgba(58,58,58,0.6);padding:2px 1px 2px 2px">入り抜き鉛筆</div>
<div class="t" style="right:652px;top:244px;font-size:7.8px;color:#e4e4e4;background:rgba(58,58,58,0.6);padding:2px 1px 2px 2px">鉛筆</div>
<div class="t" style="right:652px;top:263px;font-size:7.8px;color:#e4e4e4;background:rgba(58,58,58,0.6);padding:2px 1px 2px 2px">なめらか線画ペン</div>
<div class="t" style="right:652px;top:281px;font-size:7.8px;color:#e4e4e4;background:rgba(58,58,58,0.6);padding:2px 1px 2px 2px">魔王鉛筆</div>
<div class="t" style="right:652px;top:299px;font-size:7.8px;color:#e4e4e4;background:rgba(58,58,58,0.6);padding:2px 1px 2px 2px">いいろペン</div>
<div class="t" style="left:46px;width:25px;text-align:center;top:390.5px;font-size:9px;color:#e8e8e8">0.7</div>
<div class="t" style="left:72px;width:25px;text-align:center;top:390.5px;font-size:9px;color:#e8e8e8">1</div>
<div class="t" style="left:98px;width:24.5px;text-align:center;top:390.5px;font-size:9px;color:#e8e8e8">1.5</div>
<div class="t" style="left:123px;width:24.5px;text-align:center;top:390.5px;font-size:9px;color:#e8e8e8">2</div>
<div class="t" style="left:46px;width:25px;text-align:center;top:421.1px;font-size:9px;color:#e8e8e8">2.5</div>
<div class="t" style="left:72px;width:25px;text-align:center;top:421.1px;font-size:9px;color:#e8e8e8">3</div>
<div class="t" style="left:98px;width:24.5px;text-align:center;top:421.1px;font-size:9px;color:#e8e8e8">4</div>
<div class="t" style="left:123px;width:24.5px;text-align:center;top:421.1px;font-size:9px;color:#e8e8e8">5</div>
<div class="t" style="left:46px;width:25px;text-align:center;top:451.7px;font-size:9px;color:#e8e8e8">6</div>
<div class="t" style="left:72px;width:25px;text-align:center;top:451.7px;font-size:9px;color:#e8e8e8">7</div>
<div class="t" style="left:98px;width:24.5px;text-align:center;top:451.7px;font-size:9px;color:#e8e8e8">8</div>
<div class="t" style="left:123px;width:24.5px;text-align:center;top:451.7px;font-size:9px;color:#e8e8e8">10</div>
<div class="t" style="left:46px;width:25px;text-align:center;top:482.3px;font-size:9px;color:#e8e8e8">12</div>
<div class="t" style="left:72px;width:25px;text-align:center;top:482.3px;font-size:9px;color:#e8e8e8">15</div>
<div class="t" style="left:98px;width:24.5px;text-align:center;top:482.3px;font-size:9px;color:#e8e8e8">17</div>
<div class="t" style="left:123px;width:24.5px;text-align:center;top:482.3px;font-size:9px;color:#e8e8e8">20</div>
<div class="t" style="left:46px;width:25px;text-align:center;top:512.9px;font-size:9px;color:#e8e8e8">25</div>
<div class="t" style="left:72px;width:25px;text-align:center;top:512.9px;font-size:9px;color:#e8e8e8">30</div>
<div class="t" style="left:98px;width:24.5px;text-align:center;top:512.9px;font-size:9px;color:#e8e8e8">40</div>
<div class="t" style="left:123px;width:24.5px;text-align:center;top:512.9px;font-size:9px;color:#e8e8e8">50</div>
<div class="t" style="left:46px;width:25px;text-align:center;top:543.5px;font-size:9px;color:#e8e8e8">60</div>
<div class="t" style="left:72px;width:25px;text-align:center;top:543.5px;font-size:9px;color:#e8e8e8">70</div>
<div class="t" style="left:98px;width:24.5px;text-align:center;top:543.5px;font-size:9px;color:#e8e8e8">80</div>
<div class="t" style="left:123px;width:24.5px;text-align:center;top:543.5px;font-size:9px;color:#e8e8e8">100</div>
<div class="t" style="left:46px;width:25px;text-align:center;top:574.1px;font-size:9px;color:#e8e8e8">120</div>
<div class="t" style="left:72px;width:25px;text-align:center;top:574.1px;font-size:9px;color:#e8e8e8">150</div>
<div class="t" style="left:98px;width:24.5px;text-align:center;top:574.1px;font-size:9px;color:#e8e8e8">170</div>
<div class="t" style="left:123px;width:24.5px;text-align:center;top:574.1px;font-size:9px;color:#e8e8e8">200</div>
<div class="t" style="left:46px;width:25px;text-align:center;top:604.7px;font-size:9px;color:#e8e8e8">250</div>
<div class="t" style="left:72px;width:25px;text-align:center;top:604.7px;font-size:9px;color:#e8e8e8">300</div>
<div class="t" style="left:98px;width:24.5px;text-align:center;top:604.7px;font-size:9px;color:#e8e8e8">400</div>
<div class="t" style="left:123px;width:24.5px;text-align:center;top:604.7px;font-size:9px;color:#e8e8e8">500</div>
<div class="t" style="left:46px;width:25px;text-align:center;top:635.3px;font-size:9px;color:#e8e8e8">600</div>
<div class="t" style="left:72px;width:25px;text-align:center;top:635.3px;font-size:9px;color:#e8e8e8">700</div>
<div class="t" style="left:98px;width:24.5px;text-align:center;top:635.3px;font-size:9px;color:#e8e8e8">800</div>
<div class="t" style="left:123px;width:24.5px;text-align:center;top:635.3px;font-size:9px;color:#e8e8e8">1000</div>
<div class="t" style="left:46px;width:25px;text-align:center;top:665.9px;font-size:9px;color:#e8e8e8">1200</div>
<div class="t" style="left:72px;width:25px;text-align:center;top:665.9px;font-size:9px;color:#e8e8e8">1500</div>
<div class="t" style="left:98px;width:24.5px;text-align:center;top:665.9px;font-size:9px;color:#e8e8e8">1700</div>
<div class="t" style="left:123px;width:24.5px;text-align:center;top:665.9px;font-size:9px;color:#e8e8e8">2000</div>
<div class="t" style="left:193px;top:256px;font-size:8.5px;color:#dcdcdc">通常</div>
<div class="t" style="left:273.5px;top:256px;font-size:9px;color:#e6e6e6">100</div>
<div class="t" style="left:229.4px;top:316px;font-size:8.5px;color:#e2e2e2">29 % <span style="font-size:7px">オーバー</span></div>
<div class="t" style="left:229.4px;top:325.5px;font-size:8.5px;color:#e2e2e2">レイヤー 20</div>
<div class="t" style="left:234px;top:341px;font-size:8.5px;color:#e2e2e2">100 % 通常</div>
<div class="t" style="left:234px;top:350.5px;font-size:8.5px;color:#e2e2e2">フォルダー3</div>
<div class="t" style="left:246.3px;top:365.5px;font-size:8.5px;color:#e2e2e2">100 % <span style="font-size:6px">:</span></div>
<div class="t" style="left:246.3px;top:375.5px;font-size:8.5px;color:#e2e2e2;width:31px;overflow:hidden"><span style="font-size:8px">フォルダー</span></div>
<div class="t" style="left:242px;top:392px;font-size:8.5px;color:#e6e8f0">100 % <span style="font-size:7px">通</span></div>
<div class="t" style="left:242px;top:401.5px;font-size:8.5px;color:#e6e8f0">レイヤー 23</div>
<div class="t" style="left:242px;top:417.5px;font-size:8.5px;color:#e2e2e2">100 % <span style="font-size:7px">通</span></div>
<div class="t" style="left:242px;top:427px;font-size:8.5px;color:#e2e2e2">レイヤー 22</div>
<div class="t" style="left:242px;top:442.8px;font-size:8.5px;color:#e2e2e2">100 % <span style="font-size:7px">通</span></div>
<div class="t" style="left:242px;top:452.3px;font-size:8.5px;color:#e2e2e2">レイヤー 21</div>
<div class="t" style="left:242px;top:468px;font-size:8.5px;color:#e2e2e2">100 % <span style="font-size:7px">通</span></div>
<div class="t" style="left:242px;top:477.5px;font-size:8.5px;color:#e2e2e2">レイヤー 2</div>
<div class="t" style="left:246.3px;top:492.5px;font-size:8.5px;color:#e2e2e2">100 % <span style="font-size:6px">:</span></div>
<div class="t" style="left:246.3px;top:502.5px;font-size:8.5px;color:#e2e2e2;width:31px;overflow:hidden"><span style="font-size:8px">フォルダー</span></div>
<div class="t" style="left:229.4px;top:517.8px;font-size:8.5px;color:#e2e2e2">65 % 通常</div>
<div class="t" style="left:229.4px;top:528.5px;font-size:8.5px;color:#e2e2e2">レイヤー 1</div>
<div class="t" style="left:249px;top:553.5px;font-size:8px;color:#e2e2e2">用紙</div>
<svg class="a" style="left:0;top:0" width="799" height="786" viewBox="0 0 799 786">
<g fill="none" stroke-linecap="round" stroke-linejoin="round">
<!-- ============ GREEN ROUGHS ============ -->
<g stroke="#c0c9c0" stroke-width="3.3" opacity="0.88">
<!-- fig1 head rings -->
<ellipse cx="395" cy="407" rx="51" ry="55"/>
<ellipse cx="392" cy="417" rx="44" ry="46"/>
<!-- fig1 body -->
<path d="M362,466 Q350,500 349,560 Q349,610 358,618 Q380,622 404,614 Q414,560 412,520 Q410,480 409,468"/>
<path d="M356,520 Q354,580 360,615" opacity="0.6"/>
<!-- fig2 head rings -->
<ellipse cx="512" cy="378" rx="53" ry="61"/>
<ellipse cx="510" cy="398" rx="57" ry="57"/>
<ellipse cx="507" cy="420" rx="52" ry="47"/>
<path d="M458,350 Q468,320 512,315 Q558,318 568,358"/>
<!-- fig2 body -->
<path d="M476,452 Q468,500 468,550 Q468,600 475,628"/>
<path d="M544,452 Q550,500 546,550 Q548,600 542,628"/>
<path d="M470,591 Q510,588 546,591 M468,605 Q510,602 548,605 M472,619 Q510,616 546,618 M474,627 Q510,625 545,626"/>
<path d="M462,520 Q457,580 465,628" opacity="0.7"/>
<!-- fig3 head rings -->
<ellipse cx="640" cy="421" rx="45" ry="43"/>
<ellipse cx="637" cy="417" rx="41" ry="39"/>
<!-- fig3 body -->
<path d="M606.6,468 Q604,540 605.2,619 Q635,624 666.7,624.6"/>
<path d="M669.5,473.6 Q671,540 669.5,613.4"/>
<path d="M600,591 Q640,588 676,591 M602,601 Q640,598 676,600.8"/>
<path d="M594,552 Q592,600 596,630" opacity="0.6"/>
<path d="M676,520 Q680,580 676,640" opacity="0.5"/>
<!-- fig4 -->
</g><g stroke="#aeb9ae" stroke-width="3.6" opacity="0.9">
<ellipse cx="752" cy="445" rx="38" ry="40"/>
<ellipse cx="754" cy="441" rx="34" ry="36"/>
<path d="M733,488 Q721,520 721,560 Q722,600 724,624"/>
<path d="M731,527 Q726,570 726,609"/>
<path d="M779,476 Q786,550 786.4,633"/>
<path d="M726,602 Q755,599 784,597"/>
<path d="M723.6,621 Q750,626 781.5,628.5"/>
</g>
<!-- ============ RED UNDERSKETCH ============ -->
<g stroke="#cc8a8a" stroke-width="1.2" opacity="0.9">
<!-- fig1 -->
<path d="M355,440 Q385,460 420,436"/>
<path d="M373,462 Q356,463 350.3,465 Q345,480 342.6,493 Q342,502 346.5,508.4 Q355,518 365,524"/>
<path d="M366,470 Q368,540 367,640 Q368,650 384,650"/>
<path d="M414,466 Q420,500 418,560 Q415,610 416,642"/>
<path d="M390,570 L391,642 M398,570 L399,642"/>
<path d="M422,470 Q430,500 424,545"/>
<!-- fig2 -->
<path d="M454,602 Q450,630 451,656 L478,656"/>
<path d="M460,470 Q455,540 458,600"/>
<path d="M470,555 Q510,552 555,555"/>
<path d="M555,540 Q560,600 567,645"/>
<path d="M551,470 Q556,510 555,545"/>
<path d="M436,490 Q430,520 440,540 Q450,546 468,534"/>
<path d="M501,577 L527,575"/>
<path d="M560,554 Q556,570 568,574 Q580,578 591,575"/>
<!-- fig3 -->
<path d="M612,455 Q640,462 664,456"/>
<path d="M602.4,462.4 Q600,520 606,560 Q612,600 616.4,630.2"/>
<path d="M666.7,462.4 Q668,520 664,560 Q662,600 661.1,630.2"/>
<path d="M606,496 Q640,492 668,498 Q676,506 666,514 Q640,518 606,515.5"/>
<path d="M640,562 L642,636"/>
</g>
<!-- ============ DARK LINEART ============ -->
<g stroke="#555050" stroke-width="1.25">
<!-- fig1 hair -->
<path d="M339,395 Q350,372 370,365 Q380,362 384,364 Q387,361 392,362 Q420,362 432,380 Q446,398 456,417"/>
<path d="M339,395 Q326,404 316,418 Q316,423 322,424 Q326,428 331,427 Q336,429 341,433"/>
<path d="M343,391 Q336,412 344,434"/>
<path d="M375,380 Q366,400 378,422 M394,401 Q404,415 387,428"/>
<path d="M344,428 L347.7,446.7 L347.8,432.5 L352.7,452.8 L350.1,439.0 L356.1,457.7 L355.5,441.8 L364.3,461.5 L361.7,445.7 L371.9,464.1 L369.9,448.9 L380.7,461.9 L379.2,450.4 L386.1,463.5 L386.9,453.2 L394.1,464.7 L396.3,450.1 L403.1,460.9 L403.9,447.9 L411.0,459.6 L410.9,445.8 L417.4,454.8 L418.0,442.6 L423.6,451.4 L423.1,438.6 L430.3,445.0 L429.2,431.1 L434.6,441.7 L432.3,427.2 L438.1,435.4 L437.0,423.1 L444.9,427.8 L440.4,418.8" stroke-width="0.9"/>
<path d="M428,394 Q440,402 438,418 M426,408 L438,402 M432,416 L444,412"/>
<path d="M440,400 Q450,410 457,419 L470,410"/>
<!-- fig1 body -->
<path d="M373,460 Q360,460 354,462.6 Q350,465 349,470.3 Q344,485 340,497 Q339,503 341.4,506 Q350,515 360.4,523.7 L372,528.2"/>
<path d="M357.9,469 Q360,490 360.4,502 Q368,508 377,512.3"/>
<path d="M369.4,511 L364.3,523.7 M378.3,513.5 L373.2,527.5"/>
<path d="M378.3,513.5 Q384,512 389.7,513.5 Q387,517 383,517 M385.9,521.2 L397.3,525 Q398,528 395,528 L384,525 M384.6,526.2 L397.3,532.6 Q397,535 394,534 L383,529 M382,531.3 L391,537.7 Q390,540 387,539 L380,534 M379.5,536.4 L383.3,540.2 Q382,542 379,540 L373.2,527.5"/>
<path d="M407.5,462.6 Q413,464 416.4,467.7 Q419,472 420.2,480.4 Q421,510 421.5,533.9 L411.3,536.4 L420.2,536.4 L420,545.3 L411,545.3"/>
<path d="M408.8,493.2 Q410,520 408.2,555 Q409,600 411,636 Q414,640 412,646 L404,647 Q396,647 394,641 L393,569"/>
<path d="M393.5,541.5 Q393,553 399.5,553 Q405.6,553 405.6,541.5"/>
<path d="M360.4,522.4 Q361.7,560 363,600 Q362,620 363,636 Q362,648 370,648 L384,649 Q389,646 388,640 L387,569"/>
<path d="M383,556 L387.5,569 L393,556"/>
<path d="M376,475 Q380,500 384,512 M391,488 L391,505"/>
<!-- fig2 helmet -->
<path d="M469,388 Q469,366 480,353 Q490,346 496,346.5 L522,346.5 Q532,350 538,358 Q546,372 547,392"/>
<path d="M493.4,347 L493.4,437 M496.9,347 L496.9,437 M521.4,347 L521.4,437 M525.8,347 L525.8,437"/>
<path d="M481,404.4 L533,404.4 M481,408 L533,408"/>
<path d="M470,367.6 L545,367.6" opacity="0.5"/>
<path d="M483,435 Q508,441 533,435"/>
<!-- hood pads -->
<path d="M482,441 Q468,436 461,426 Q455,414 457.5,400 Q459,389 465,386 Q470,385 472,390 Q477,398 480,412 Q482,424 483,436"/>
<path d="M479,437 Q468,432 463,423 Q459,412 461,401 Q463,392 467,391"/>
<path d="M534.6,441.2 Q549,436 555,426 Q560,414 557.3,400 Q556,389 550,386 Q545,385 543,390 Q538,398 535.5,412 Q533.5,424 532.8,436"/>
<path d="M537.5,437 Q548,432 553,423 Q557,412 555,401 Q553,392 549,391"/>
<!-- shoulders/cape -->
<path d="M458,419 Q442,424 436,433 Q432,442 437,446 Q445,448 482,442.5"/>
<path d="M460,423 Q446,428 440,436 Q438,441 442,443 L478,439.5"/>
<path d="M557,419 Q573,424 579,433 Q583,442 578,446 Q570,448 534.6,442.5"/>
<path d="M555,423 Q569,428 575,436 Q577,441 573,443 L538,439.5"/>
<!-- fig2 left arm -->
<path d="M436.4,449.3 Q427,470 424.5,482.6 Q440,496 453,506.4"/>
<path d="M453,506.4 L447,513 Q444,515 441,514 Q438,514 440,517 L446,519 M446,519 L439,521 Q436,523 438,525 L447,525 M447,525 L439,528 Q437,531 440,532 L449,530 M449,530 L443,535 Q442,539 445,538 L453,533 Q460,532 464,526 L459,514 Z"/>
<path d="M459,514 L466,510 L470,522 L464,526"/>

<!-- fig2 coat -->
<path d="M460.2,454 Q456,470 456.6,477.9 L459,481.4 Q466,486 467.4,489.8 Q469,500 469.8,518.3 Q471,540 472,554"/>
<path d="M551.9,458.8 Q548,480 546,497 Q544,520 543.6,542"/>
<path d="M580.5,449.3 Q584,490 586.4,522 M553,482.6 Q560,500 565,522"/>
<path d="M563.8,521.9 L586.4,521.9 L586.4,532.6 L566,532.6 Z"/>
<path d="M566,533 Q560,537 556,539 Q555,542 558,542 L566,540 M568,538 L567,550 Q568,553 570.5,551 L571.5,540 M572,540 L572,554 Q574,557 576,554 L576,540 M576.5,540 L578,556 Q580,558 581.5,555 L580.5,539 M581,539 L584,553 Q586,555 587.5,552 L585.5,536 M586,533 Q591,538 592,545 Q593,548 590,547 L586.5,540"/>
<path d="M479.2,511.2 h10.8 v10.7 h-10.8 z M499.5,511.2 h11.9 v10.7 h-11.9 z M518.6,511.2 h13.1 v10.7 h-13.1 z M534,511.2 h6 v10.7 h-6"/>
<path d="M518.6,527.9 v9 q0,4 7.7,4 q7.7,0 7.7,-4 v-9"/>
<path d="M498,490 Q502,500 501,505 M527,490 Q522,500 519,506 M498,527 L495,533 M490,538 Q484,546 480,550"/>
<!-- fig2 legs -->
<path d="M468.5,540 Q465,580 457.8,623.2 Q443,626 440,637 Q441,650 458,651.8 L478,651.8"/>
<path d="M443.5,635 L456.6,642.3 M446,630 L460,637"/>
<path d="M494.7,561.4 Q510,552 519.6,550.7"/>
<path d="M503,557.8 Q498,575 493.5,587.6 Q485,620 479.2,647"/>
<path d="M512.5,557.8 Q517,575 521,587.6 Q527,615 531.7,644.7 L534,650.6 L565,649.4 Q574,644 572,635 Q570,626 562.6,623.2"/>
<path d="M544.8,540 Q550,580 557.8,622"/>
<path d="M536,645 L565,642"/>
<!-- fig3 box head -->
<path d="M586.6,377.7 Q635,370 682.2,377.7 Q683,410 683.3,441.8 Q636,449 588.6,442.8 Q587,410 586.6,377.7 Z"/>
<path d="M600.8,374 L604,356 Q609,353 615,355 L619,374 M603.5,356 Q609,358 614.5,355.5"/>
<path d="M587,395 Q574,405 561,417.4 Q568,419 574,421 Q580,420 587,429.6"/>
<path d="M683,399 Q697,410 709.7,412.3 Q702,420 696,419 Q690,422 683,425.5"/>
<!-- fig3 collar & body -->
<path d="M624,444 Q622,452 630,452 Q636,448 634,444 M636,446 Q640,456 648,450"/>
<path d="M608,456.8 Q601,462 599.6,473.6 Q597,495 598.2,510 Q600,518 605.2,521.1 Q625,528 644.3,532.3"/>
<path d="M643,531 L657,533 L657,540.7 L641,538 M643,531 L641,538"/>
<path d="M641,538 Q634,544 633,548 M640,541 Q636,552 638,556 M644,541 Q641,554 644.3,560.3 M649,541 Q647,554 650,559 M653,540 Q653,552 655.5,557.5 M657,540 Q660,546 662,549"/>
<path d="M663.9,456.8 Q669,460 670.9,468 Q671,500 670.9,524 L673.7,529.5 L664,530"/>
<path d="M655.5,470.8 Q659,500 661,524 L664,524"/>
<path d="M605.2,524 Q610,560 616.4,591 Q618,615 619.2,630.2 Q614,633 616.4,635.8 L619.2,647 L636,648.4 Q638,642 637.3,633 L633,565.9"/>
<path d="M643,565.9 L645.7,633 Q644,642 645.7,648.4 L662.5,647 Q666,640 664,635.8 L659.7,630.2 Q662,580 664,540.7"/>
<path d="M618,470 Q622,490 628,500 M636,462 Q640,480 636,495 M615,488 Q630,492 640,500"/>
<path d="M598,512 Q592,525 596,535" stroke-width="0.9"/>
</g>
<!-- rivets -->
<g fill="#777">
<circle cx="500.4" cy="362.4" r="0.9"/><circle cx="518.8" cy="363" r="0.9"/><circle cx="490.5" cy="401" r="0.9"/><circle cx="490.5" cy="410.5" r="0.9"/><circle cx="528" cy="401" r="0.9"/><circle cx="528" cy="410.5" r="0.9"/><circle cx="490" cy="433" r="0.9"/><circle cx="528" cy="433" r="0.9"/>
</g>
</g>
</svg>
</body></html>
